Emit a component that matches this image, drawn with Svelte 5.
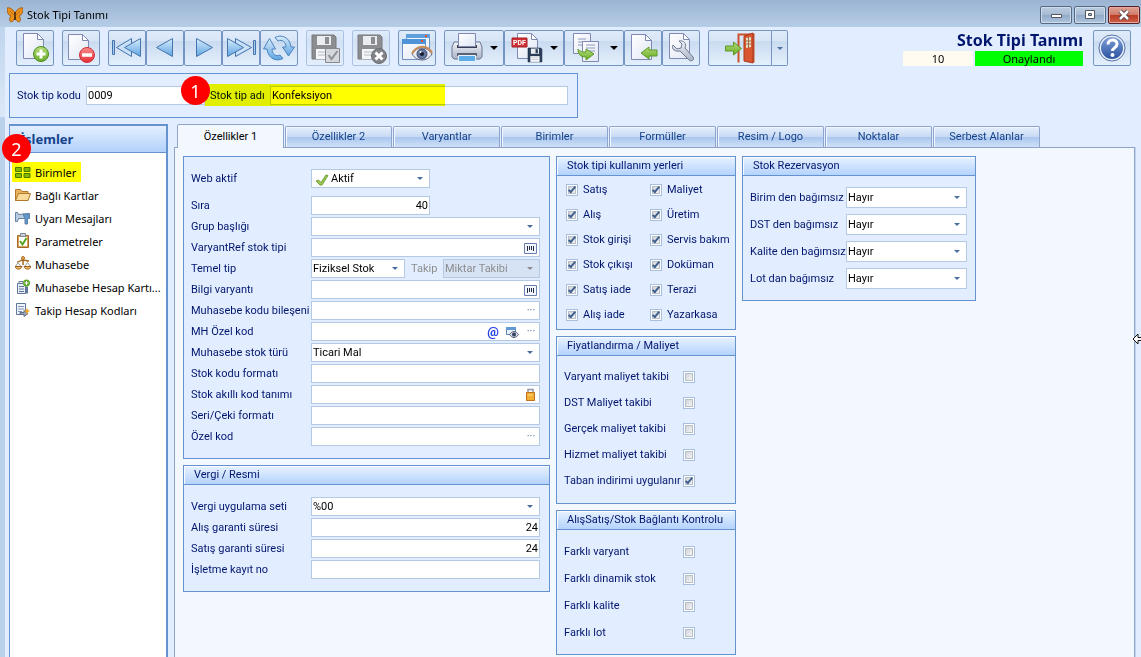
<script lang="ts">
  type Field = {
    id: string;
    label: string;
    kind: "text" | "select" | "pair";
    value?: string;
    align?: "right";
    tools?: string[];
  };

  const tabs = [
    "Özellikler 1",
    "Özellikler 2",
    "Varyantlar",
    "Birimler",
    "Formüller",
    "Resim / Logo",
    "Noktalar",
    "Serbest Alanlar",
  ];
  let activeTab = $state("Özellikler 1");

  const actions = [
    { icon: "grid", label: "Birimler", marked: true },
    { icon: "folder", label: "Bağlı Kartlar" },
    { icon: "horn", label: "Uyarı Mesajları" },
    { icon: "clipboard", label: "Parametreler" },
    { icon: "scales", label: "Muhasebe" },
    { icon: "ledger", label: "Muhasebe Hesap Kartı..." },
    { icon: "codes", label: "Takip Hesap Kodları" },
  ];

  const toolGroups = [
    [{ icon: "new", title: "Yeni" }],
    [{ icon: "remove", title: "Sil" }],
    [
      { icon: "first", title: "İlk" },
      { icon: "prev", title: "Önceki" },
      { icon: "next", title: "Sonraki" },
      { icon: "last", title: "Son" },
      { icon: "refresh", title: "Yenile" },
    ],
    [{ icon: "save", title: "Kaydet", disabled: true }],
    [{ icon: "cancel", title: "Vazgeç", disabled: true }],
    [{ icon: "preview", title: "Önizle" }],
    [
      { icon: "print", title: "Yazdır", menu: true },
      { icon: "pdf", title: "PDF", menu: true },
      { icon: "copy", title: "Kopyala", menu: true },
      { icon: "import", title: "Al" },
      { icon: "tools", title: "Araçlar" },
    ],
  ];

  const mainFields: Field[] = [
    { id: "sira", label: "Sıra", kind: "text", value: "40", align: "right" },
    { id: "grup", label: "Grup başlığı", kind: "select", value: "" },
    { id: "varyantref", label: "VaryantRef stok tipi", kind: "text", tools: ["barcode"] },
    { id: "temel", label: "Temel tip", kind: "pair", value: "Fiziksel Stok" },
    { id: "bilgi", label: "Bilgi varyantı", kind: "text", tools: ["barcode"] },
    { id: "mkb", label: "Muhasebe kodu bileşeni", kind: "text", tools: ["dots"] },
    { id: "mhozel", label: "MH Özel kod", kind: "text", tools: ["at", "view", "dots"] },
    { id: "mstur", label: "Muhasebe stok türü", kind: "select", value: "Ticari Mal" },
    { id: "skf", label: "Stok kodu formatı", kind: "text" },
    { id: "sak", label: "Stok akıllı kod tanımı", kind: "text", tools: ["lock"] },
    { id: "seri", label: "Seri/Çeki formatı", kind: "text" },
    { id: "ozel", label: "Özel kod", kind: "text", tools: ["dots"] },
  ];

  const taxFields: Field[] = [
    { id: "vergi", label: "Vergi uygulama seti", kind: "select", value: "%00" },
    { id: "alisg", label: "Alış garanti süresi", kind: "text", value: "24", align: "right" },
    { id: "satisg", label: "Satış garanti süresi", kind: "text", value: "24", align: "right" },
    { id: "kayit", label: "İşletme kayıt no", kind: "text" },
  ];

  const usages = [
    "Satış", "Maliyet",
    "Alış", "Üretim",
    "Stok girişi", "Servis bakım",
    "Stok çıkışı", "Doküman",
    "Satış iade", "Terazi",
    "Alış iade", "Yazarkasa",
  ];

  const pricing = [
    { label: "Varyant maliyet takibi", on: false },
    { label: "DST Maliyet takibi", on: false },
    { label: "Gerçek maliyet takibi", on: false },
    { label: "Hizmet maliyet takibi", on: false },
    { label: "Taban indirimi uygulanır", on: true },
  ];

  const linkChecks = [
    { label: "Farklı varyant", on: false },
    { label: "Farklı dinamik stok", on: false },
    { label: "Farklı kalite", on: false },
    { label: "Farklı lot", on: false },
  ];

  const reservations = [
    "Birim den bağımsız",
    "DST den bağımsız",
    "Kalite den bağımsız",
    "Lot dan bağımsız",
  ];
</script>

{#snippet page(x: number, y: number)}
  <g transform="translate({x} {y})">
    <path d="M.5.5h14l6 6v19h-20z" fill="url(#paper)" stroke="#8089b4" />
    <path d="M14.500.5v6h6z" fill="#fff" stroke="#8089b4" />
  </g>
{/snippet}

{#snippet floppy(x: number, y: number, s: number, body: string, edge: string)}
  <g transform="translate({x} {y}) scale({s})">
    <path d="M0 0h22l2 2v22H0z" fill={body} stroke={edge} />
    <path d="M5 1h14v9H5z" fill="#e9edf2" />
    <path d="M13 2h4v7h-4z" fill={body} />
    <path d="M4 14h16v10H4z" fill="#f4f6fa" />
    <path d="M6 17h12M6 20h12" stroke="#b4bac4" />
  </g>
{/snippet}

{#snippet toolIcon(name: string)}
  <svg class="tool-icon" viewBox="0 0 32 32" aria-hidden="true">
    {#if name === "new"}
      {@render page(4, 1)}
      <circle cx="22" cy="22" r="7.500" fill="url(#green)" stroke="#4b8a1c" />
      <path d="M22 17.500v9M17.500 22h9" stroke="#fff" stroke-width="3" />
    {:else if name === "remove"}
      {@render page(3, 2)}
      <circle cx="22" cy="23" r="7.500" fill="url(#red)" stroke="#d03038" />
      <path d="M17 23h10" stroke="#fff" stroke-width="3.500" />
    {:else if name === "first"}
      <path d="M1.500 8.500h2v14h-2z" fill="#a9cdf0" stroke="#4473ae" />
      <path d="M20.500 6.500v18L5.500 15.500z" fill="#c9e0f7" stroke="#4473ae" />
      <path d="M29.500 6.500v18L13.500 15.500z" fill="url(#blue)" stroke="#4473ae" />
    {:else if name === "prev"}
      <path d="M23.500 6.500v18L7.500 15.500z" fill="url(#blue)" stroke="#4473ae" />
    {:else if name === "next"}
      <path d="M9.500 6.500v18L25.500 15.500z" fill="url(#blue)" stroke="#4473ae" />
    {:else if name === "last"}
      <path d="M28.500 8.500h2v14h-2z" fill="#a9cdf0" stroke="#4473ae" />
      <path d="M10.500 6.500v18l16-9z" fill="#c9e0f7" stroke="#4473ae" />
      <path d="M2.500 6.500v18l16-9z" fill="url(#blue)" stroke="#4473ae" />
    {:else if name === "refresh"}
      <path d="M12 5.500C18 2 27 5 28 15h3.500l-6 9-6-9H23c0-5-4-8-8-6z" fill="url(#blue)" stroke="#4b83bf" />
      <path d="M20 26.500C14 30 5 27 4 17H.5l6-10.500 6 10.500H9c0 5 4 8 8 6z" fill="url(#blue)" stroke="#4b83bf" />
    {:else if name === "save"}
      {@render floppy(3, 3, 1, "#8b8d91", "#77797d")}
      <path d="M16.500 16.500h14v14h-14z" fill="#d4d7dc" stroke="#85888e" />
      <path d="m19.500 23 3 4 6-8" fill="none" stroke="#8d9095" stroke-width="2" />
    {:else if name === "cancel"}
      {@render floppy(3, 3, 1, "#8b8d91", "#77797d")}
      <circle cx="24" cy="24" r="7.500" fill="#808489" stroke="#6b6e73" />
      <path d="m20.500 20.500 7 7m0-7-7 7" stroke="#fff" stroke-width="3" />
    {:else if name === "preview"}
      <path d="M5.500 2.500h23v20h-23z" fill="#f0f6fd" stroke="#6d93c2" />
      <path d="M5 2h24v4H5z" fill="#5f9fdc" />
      <path d="M1.500 7.500h23v20h-23z" fill="url(#paper)" stroke="#6d93c2" />
      <path d="M1 7h24v5H1z" fill="#4f94d8" />
      <path d="M20 8h2v2h-2zM24 3h2v2h-2z" fill="#e8502d" />
      <path d="M11 22c5-8 15-8 20 0-5 8-15 8-20 0z" fill="#e9e9f2" stroke="#5f6686" />
      <path d="M11 21.500c5-9 16-9 20-.5" fill="none" stroke="#c88c58" stroke-width="2" />
      <circle cx="21" cy="22" r="5" fill="#65799f" stroke="#3f4e72" />
      <circle cx="21" cy="22" r="2" fill="#141c30" />
      <circle cx="19.500" cy="20" r="1" fill="#fff" />
    {:else if name === "print"}
      <path d="M3 10h26l2 5v10l-2 2H3l-2-2V15z" fill="url(#metal)" stroke="#6d7590" />
      <path d="M6 13h20v3H6z" fill="#3a3e4a" />
      <path d="M7.500 1.500h17v13h-17z" fill="url(#paper)" stroke="#8089b4" />
      <path d="M6 21h20v3H6z" fill="#5b6278" />
      <path d="M7.500 23.500h17v6h-17z" fill="#5dabe8" stroke="#e9f2fb" />
    {:else if name === "pdf"}
      {@render page(6, 1)}
      <path d="M1 6h15v9H1z" fill="#cf2f35" stroke="#a82026" />
      <text x="2" y="13" font-size="7" font-weight="bold" fill="#fff">PDF</text>
      {@render floppy(17, 16, 0.58, "#2c3d58", "#1d2b42")}
    {:else if name === "copy"}
      <path d="M2.500 1.500h17v20h-17z" fill="url(#paper)" stroke="#8089b4" />
      <path d="M7 7h8M7 10h8M7 13h4" stroke="#8d9abf" />
      <path d="M11.500 9.500h16v20h-16z" fill="url(#paper)" stroke="#8089b4" />
      <path d="M15 13h9M15 16h9M18 19h6" stroke="#8d9abf" />
      <path d="M7 17c2 3 5 3 8 3v-3l8 5-8 6v-3c-6 0-8-3-8-8z" fill="url(#green)" stroke="#5c9a28" />
    {:else if name === "import"}
      {@render page(4, 2)}
      <path d="M30 18h-8v-3l-8 6 8 6v-3h8z" fill="url(#green)" stroke="#5c9a28" />
    {:else if name === "tools"}
      {@render page(4, 1)}
      <path d="M8 13l4 4 4-1 1-4-3-3c5-1 8 3 6 7l8 9c2 3-2 5-4 3l-9-9c-5 1-9-2-7-6z" fill="url(#metal)" stroke="#6d7a94" />
    {:else if name === "exit"}
      <path d="M14.500 30.500v-28h15v28" fill="none" stroke="#c9522f" stroke-width="2" />
      <path d="M20 4l9-3v30l-9-2z" fill="#d85530" stroke="#a93a1d" />
      <path d="M22 6l5-1v10l-5 1z" fill="#e3dfc0" />
      <path d="M24.500 5v11M22 9h5M22 12h5" stroke="#a06a4a" />
      <path d="M1.500 14h8v-4l8 6.500-8 6.500v-4h-8z" fill="url(#green)" stroke="#5c9a28" />
    {:else if name === "help"}
      <circle cx="16" cy="16" r="13" fill="#eef3fb" stroke="#5270a8" />
      <circle cx="16" cy="16" r="11" fill="url(#help)" />
      <path d="M12 12.500c0-6 9-6 9-.5 0 4-4.500 3.500-4.500 7" fill="none" stroke="#fff" stroke-width="3" />
      <circle cx="16.500" cy="23" r="2" fill="#fff" />
    {/if}
  </svg>
{/snippet}

{#snippet smallIcon(name: string)}
  <svg class="small-icon" viewBox="0 0 16 16" aria-hidden="true">
    {#if name === "grid"}
      <path d="M.5 3.500h6v4h-6zM9 3.500h6v4H9zM.5 9.500h6v4h-6zM9 9.500h6v4H9z" fill="#86ba00" stroke="#4b7a00" />
    {:else if name === "folder"}
      <path d="M.5 13.500v-11h5l1.500 2h6v9z" fill="#e9b25c" stroke="#b07828" />
      <path d="m.5 13.500 3-7h12l-2.500 7z" fill="#fbdb9c" stroke="#b07828" />
    {:else if name === "horn"}
      <path d="M.5 2.500h2l1 2 11-1v5l-11 0-1 3h-2z" fill="#b9cde2" stroke="#66809f" />
      <path d="M8 4h6.500v4l-2 1v5h-2.500V9z" fill="#5f98cf" stroke="#5e7fa6" />
    {:else if name === "clipboard"}
      <path d="M2.500 2.500h11v12h-11z" fill="#d99f55" stroke="#a36b2a" />
      <path d="M4 4h8v9H4z" fill="#fff" />
      <path d="M5.500.5h5v3h-5z" fill="#c9d0da" stroke="#7c8797" />
      <path d="m5 8 2.500 3.500L11.500 5" fill="none" stroke="#59a51d" stroke-width="2" />
    {:else if name === "scales"}
      <path d="M8 1v8M2 6c3 0 3-2 6-2s3 1 6 1" fill="none" stroke="#a86a20" stroke-width="1.500" />
      <circle cx="8" cy="2" r="1.500" fill="#f0b458" stroke="#a86a20" />
      <path d="m.5 10.500 2.500-4 3 4zM9.500 10.500l3-4 3 4z" fill="#fff" stroke="#9a9a9a" />
      <path d="M0 10.500h7c-1 3.500-6 3.500-7 0zM9 10.500h7c-1 3.500-6 3.500-7 0z" fill="#f2b766" stroke="#9c5f1b" />
    {:else if name === "ledger"}
      <path d="M2.500 4.500h8v10h-8z" fill="#e7edf6" stroke="#62769a" />
      <path d="M4 2.500h4v2H4zM4 7.500h5M4 10h5M4 12.500h5" fill="none" stroke="#62769a" />
      <path d="M12 7.500v7" stroke="#62769a" stroke-width="2" />
      <circle cx="11.500" cy="4" r="3.500" fill="#62a92b" />
      <path d="M11.500 2v4m-2-2h4" stroke="#fff" />
    {:else if name === "codes"}
      <path d="M1.500 1.500h9v11h-9z" fill="#f1f5fb" stroke="#60779d" />
      <path d="M3 4.500h6M3 7h6M3 9.500h4" stroke="#7d90b3" />
      <path d="M5 10.500h4v-2l4 3-4 3v-2H5z" fill="#9aa7bd" stroke="#5b6b88" />
      <path d="m12 6 1 2 2 1-2 1-1 3-1-3-2-1 2-1z" fill="#f5a623" />
    {:else if name === "butterfly"}
      <path d="M8 6.500C7 3 3 0 0 1c0 4 1 7 4 8-2 2-2 5 0 6 2 0 4-3 4-5 0 2 2 5 4 5 2-1 2-4 0-6 3-1 4-4 4-8-3-1-7 2-8 5.500z" fill="#e8901a" stroke="#9a5210" stroke-width=".8" />
      <path d="M8 5v8" stroke="#3d2208" stroke-width="1.500" />
      <path d="m7 8-4-4M9 8l4-4" stroke="#b0600c" stroke-width=".7" />
    {:else if name === "check"}
      <path d="M2 10l2.500-1L7 11.500 12 4l2 .5L8 14H6z" fill="#9cc957" stroke="#6f9f35" />
    {:else if name === "barcode"}
      <path d="M2.500 3.500h12v10h-12z" fill="#f4f6fd" stroke="#6a7fae" />
      <path d="M5.500 6v5M7.500 6v4M9.500 6v4M11.500 6v5" stroke="#222c4a" />
    {:else if name === "view"}
      <path d="M2.500 3.500h9v7h-9z" fill="#eaf2fb" stroke="#5d83b3" />
      <path d="M2 3h10v3H2z" fill="#5f98d3" />
      <path d="M5.500 10.500c3-4 6-4 9 0-3 4-6 4-9 0z" fill="#d5dae6" stroke="#53617e" />
      <circle cx="10" cy="10.500" r="2" fill="#33405e" />
    {:else if name === "lock"}
      <path d="M6 7V2.500h5V7" fill="none" stroke="#9097a8" stroke-width="1.500" />
      <path d="M4.500 5.500h8v8h-8z" fill="#f4b034" stroke="#c0701a" />
      <path d="M6 8h5" stroke="#fbd784" />
    {/if}
  </svg>
{/snippet}

{#snippet dropdown(id: string, value: string, disabled = false)}
  <div class="box select" class:disabled>
    <select {id} {disabled}>
      <option>{value}</option>
    </select>
    <span class="caret"></span>
  </div>
{/snippet}

{#snippet row(f: Field)}
  <label for={f.id}>{f.label}</label>
  {#if f.kind === "select"}
    {@render dropdown(f.id, f.value ?? "")}
  {:else if f.kind === "pair"}
    <div class="pair">
      {@render dropdown(f.id, f.value ?? "")}
      <label class="dim" for="takip">Takip</label>
      {@render dropdown("takip", "Miktar Takibi", true)}
    </div>
  {:else}
    <div class="box" class:short={f.id === "sira"}>
      <input id={f.id} type="text" value={f.value ?? ""} class:right={f.align === "right"} />
      {#each f.tools ?? [] as tool}
        <button class="inner-btn" type="button" aria-label={tool}>
          {#if tool === "dots"}
            <span class="dots">···</span>
          {:else if tool === "at"}
            <span class="at">@</span>
          {:else}
            {@render smallIcon(tool)}
          {/if}
        </button>
      {/each}
    </div>
  {/if}
{/snippet}

<svg class="defs" width="0" height="0" aria-hidden="true">
  <defs>
    <linearGradient id="paper" x1="0" y1="0" x2="1" y2="1">
      <stop offset="0" stop-color="#fff" /><stop offset="1" stop-color="#dfe6f4" />
    </linearGradient>
    <linearGradient id="green" x1="0" y1="0" x2="0" y2="1">
      <stop offset="0" stop-color="#b5dc7a" /><stop offset="1" stop-color="#67ac25" />
    </linearGradient>
    <linearGradient id="red" x1="0" y1="0" x2="0" y2="1">
      <stop offset="0" stop-color="#fb8c8c" /><stop offset="1" stop-color="#e52d35" />
    </linearGradient>
    <linearGradient id="blue" x1="0" y1="0" x2="0" y2="1">
      <stop offset="0" stop-color="#d8ecfb" /><stop offset="1" stop-color="#5ea5e2" />
    </linearGradient>
    <linearGradient id="metal" x1="0" y1="0" x2="0" y2="1">
      <stop offset="0" stop-color="#f1f3f8" /><stop offset="1" stop-color="#a9b2c6" />
    </linearGradient>
    <linearGradient id="help" x1="0" y1="0" x2="0" y2="1">
      <stop offset="0" stop-color="#7ea0d8" /><stop offset="1" stop-color="#2a539f" />
    </linearGradient>
  </defs>
</svg>

<div class="window">
  <header class="titlebar">
    {@render smallIcon("butterfly")}
    <span class="caption">Stok Tipi Tanımı</span>
    <button class="win-btn" type="button" aria-label="Küçült">
      <svg viewBox="0 0 30 16"><path d="M10.500 7.500h10v3h-10z" fill="#fff" stroke="#53565e" /></svg>
    </button>
    <button class="win-btn" type="button" aria-label="Büyüt">
      <svg viewBox="0 0 30 16">
        <path d="M10.500 3.500h9v8h-9z" fill="#fff" stroke="#53565e" />
        <path d="M13.500 6.500h3v2h-3z" fill="#a9bfd9" stroke="#53565e" />
      </svg>
    </button>
    <button class="win-btn close" type="button" aria-label="Kapat">
      <svg viewBox="0 0 30 16">
        <path d="m11 4 8 8m0-8-8 8" stroke="#53404a" stroke-width="4.500" />
        <path d="m11 4 8 8m0-8-8 8" stroke="#fff" stroke-width="2.500" />
      </svg>
    </button>
  </header>

  <main class="client">
    <div class="toolbar">
      {#each toolGroups as group}
        <div class="tool-group">
          {#each group as tool}
            <button class="tool" class:menu={tool.menu} type="button" title={tool.title} disabled={tool.disabled}>
              {@render toolIcon(tool.icon)}
              {#if tool.menu}<span class="arrow"></span>{/if}
            </button>
          {/each}
        </div>
      {/each}
      <div class="tool-group">
        <button class="tool exit" type="button" title="Çıkış">{@render toolIcon("exit")}</button>
        <button class="tool exit-menu" type="button" aria-label="Çıkış seçenekleri"><span class="caret"></span></button>
      </div>
      <div class="record">
        <h1>Stok Tipi Tanımı</h1>
        <div class="record-state">
          <span class="record-no">10</span>
          <span class="approved">Onaylandı</span>
        </div>
      </div>
      <button class="tool" type="button" title="Yardım">{@render toolIcon("help")}</button>
    </div>

    <section class="identity">
      <label for="kod">Stok tip kodu</label>
      <div class="box code"><input id="kod" type="text" value="0009" /></div>
      <div class="named">
        <label for="ad">Stok tip adı</label>
        <div class="box"><input id="ad" type="text" value="Konfeksiyon" /></div>
        <span class="marker"></span>
        <span class="badge badge-name">1</span>
      </div>
    </section>

    <div class="content">
      <nav class="sidebar">
        <h2>İşlemler</h2>
        <span class="badge badge-side">2</span>
        <ul>
          {#each actions as action}
            <li>
              <a href="#{action.icon}" class:marked={action.marked}>
                {@render smallIcon(action.icon)}{action.label}
              </a>
            </li>
          {/each}
        </ul>
      </nav>

      <div class="tabbed">
        <div class="tabs" role="tablist">
          {#each tabs as tab}
            <button
              class="tab"
              class:active={tab === activeTab}
              role="tab"
              aria-selected={tab === activeTab}
              onclick={() => (activeTab = tab)}>{tab}</button
            >
          {/each}
        </div>

        <div class="sheet" role="tabpanel">
          <div class="col wide">
            <section class="group">
              <div class="form">
                <label for="web">Web aktif</label>
                <div class="box select with-icon">
                  {@render smallIcon("check")}
                  <select id="web"><option>Aktif</option></select>
                  <span class="caret"></span>
                </div>
              </div>
              <div class="form rest">
                {#each mainFields as f (f.id)}
                  {@render row(f)}
                {/each}
              </div>
            </section>
            <section class="group">
              <h3>Vergi / Resmi</h3>
              <div class="form tax">
                {#each taxFields as f (f.id)}
                  {@render row(f)}
                {/each}
              </div>
            </section>
          </div>

          <div class="col narrow">
            <section class="group">
              <h3>Stok tipi kullanım yerleri</h3>
              <div class="usages">
                {#each usages as usage}
                  <label><input type="checkbox" checked />{usage}</label>
                {/each}
              </div>
            </section>
            <section class="group">
              <h3>Fiyatlandırma / Maliyet</h3>
              <div class="checks">
                {#each pricing as item}
                  <label><span>{item.label}</span><input type="checkbox" checked={item.on} /></label>
                {/each}
              </div>
            </section>
            <section class="group">
              <h3>AlışSatış/Stok Bağlantı Kontrolu</h3>
              <div class="checks loose">
                {#each linkChecks as item}
                  <label><span>{item.label}</span><input type="checkbox" checked={item.on} /></label>
                {/each}
              </div>
            </section>
          </div>

          <div class="col">
            <section class="group">
              <h3>Stok Rezervasyon</h3>
              <div class="form reserve">
                {#each reservations as label, i}
                  <label for="rez{i}">{label}</label>
                  {@render dropdown(`rez${i}`, "Hayır")}
                {/each}
              </div>
            </section>
          </div>
        </div>
      </div>

      <svg class="resize-cursor" viewBox="0 0 14 12" aria-hidden="true">
        <path d="M1 6l5-5v3.500h8v3H6V11z" fill="#fff" stroke="#111" />
      </svg>
    </div>
  </main>
</div>

<style>
  :global(body) {
    margin: 0;
  }

  .window {
    --ui: Roboto, "Liberation Sans", sans-serif;
    --shell: "Noto Sans", "Open Sans", sans-serif;
    --line: #6593cf;
    --field-line: #b4c9e4;
    --ink: #00156e;
    display: flex;
    flex-direction: column;
    height: 100vh;
    overflow: hidden;
    box-sizing: border-box;
    background: linear-gradient(#9ab4d2, #bfd5ee 27px, #dce8f8 116px, #b9d1ea 118px);
    color: var(--ink);
    font: 11px/14px var(--ui);
  }

  .window *,
  .window *::before {
    box-sizing: border-box;
  }

  .defs {
    position: absolute;
  }

  svg {
    display: block;
    flex: none;
  }

  button,
  input,
  select {
    font: inherit;
    color: inherit;
    margin: 0;
    padding: 0;
  }

  h1,
  h2,
  h3,
  ul {
    margin: 0;
    padding: 0;
  }

  .titlebar {
    display: flex;
    align-items: center;
    gap: 2px;
    height: 27px;
    flex: none;
    padding: 3px 1px 0 7px;
    background: linear-gradient(#9ab4d2, #b6cde6);
    color: #000;
    font: 11px/16px var(--shell);
  }

  .small-icon {
    width: 16px;
    height: 16px;
  }

  .caption {
    flex: 1;
    padding-left: 2px;
  }

  .win-btn {
    width: 32px;
    height: 18px;
    border: 1px solid #566a85;
    border-radius: 2px;
    background: linear-gradient(#bccde0, #a5bad2 50%, #8fa9c8 50%, #b0c6de);
    box-shadow: inset 0 0 0 1px #cfdcea;
  }

  .win-btn.close {
    border-color: #56202a;
    background: linear-gradient(#e0a294, #cf7a68 50%, #b83a22 50%, #cf6048);
    box-shadow: inset 0 0 0 1px #e4a99f;
  }

  .client {
    flex: 1;
    min-height: 0;
    display: flex;
    flex-direction: column;
    margin-left: 5px;
    padding: 3px 0 0 4px;
    background: #e2eeff;
  }

  .toolbar {
    display: flex;
    align-items: flex-start;
    gap: 8px;
    padding: 0 10px 7px 7px;
  }

  .tool-group {
    display: flex;
  }

  .tool {
    display: flex;
    align-items: center;
    justify-content: center;
    width: 38px;
    height: 36px;
    border: 1px solid #7595c2;
    border-radius: 2px;
    background: linear-gradient(#dfebfa, #d8e5f6 30%, #c9dbf0 31%, #e4effc);
  }

  .tool:disabled {
    border-color: #a9c2e2;
    background: linear-gradient(#e0ecfb, #d3e2f5 31%, #e4effc);
  }

  .tool-icon {
    width: 32px;
    height: 32px;
    font-family: var(--ui);
  }

  .tool.menu {
    width: 60px;
    gap: 7px;
    justify-content: flex-start;
    padding-left: 6px;
  }

  .tool.exit {
    width: 64px;
    border-radius: 2px 0 0 2px;
  }

  .tool.exit-menu {
    width: 16px;
    border-left: 0;
    border-radius: 0 2px 2px 0;
  }

  .arrow {
    border: 4px solid transparent;
    border-top-color: #000;
    border-bottom: 0;
  }

  .caret {
    border: 3px solid transparent;
    border-top-color: #4a6f9f;
    border-bottom: 0;
  }

  .record {
    margin-left: auto;
    padding-right: 2px;
  }

  h1 {
    font: bold 16px/21px var(--shell);
    text-align: right;
  }

  .record-state {
    display: flex;
    gap: 2px;
    color: #000;
    text-align: center;
    font-family: var(--shell);
    line-height: 15px;
  }

  .record-no {
    width: 70px;
    background: #fffbf0;
  }

  .approved {
    width: 108px;
    background: #00ff00;
  }

  .identity {
    display: flex;
    align-items: center;
    width: 569px;
    height: 45px;
    flex: none;
    padding: 0 9px 0 7px;
    border: 1px solid var(--line);
  }

  .identity > label {
    width: 69px;
  }

  .code {
    width: 119px;
  }

  .named {
    position: relative;
    flex: 1;
    display: flex;
    align-items: center;
  }

  .named label {
    width: 65px;
    padding-left: 5px;
  }

  .named .box {
    flex: 1;
  }

  .marker {
    position: absolute;
    left: 0;
    top: -2px;
    width: 240px;
    height: 22px;
    background: #ffff00;
    mix-blend-mode: multiply;
    pointer-events: none;
  }

  .badge {
    position: absolute;
    display: flex;
    align-items: center;
    justify-content: center;
    width: 29px;
    height: 29px;
    border-radius: 50%;
    background: #ff0000;
    color: #fff;
    font: 18px/20px var(--shell);
  }

  .badge-name {
    left: -24px;
    top: -10px;
  }

  .badge-side {
    left: -8px;
    top: 8px;
  }

  .content {
    position: relative;
    flex: 1;
    min-height: 0;
    display: flex;
    align-items: stretch;
    gap: 6px;
    padding: 6px 6px 0 0;
  }

  .sidebar {
    position: relative;
    width: 159px;
    flex: none;
    border: 1px solid var(--line);
    border-width: 2px 2px 0 1px;
    background: #fff;
    color: #000;
    font: 11px/17px var(--shell);
  }

  h2 {
    height: 27px;
    padding-left: 10px;
    border-bottom: 1px solid var(--line);
    background: linear-gradient(#e4effe, #b2d1fb);
    color: #15428b;
    font: bold 13px/26px var(--shell);
  }

  .sidebar ul {
    list-style: none;
    padding: 9px 0 0 2px;
  }

  .sidebar li {
    height: 23px;
    display: flex;
  }

  .sidebar a {
    display: flex;
    align-items: center;
    gap: 4px;
    height: 20px;
    padding: 0 5px 0 3px;
    color: inherit;
    text-decoration: none;
    white-space: nowrap;
  }

  .sidebar a.marked {
    background: #ffff00;
  }

  .tabbed {
    flex: 1;
    min-width: 0;
    display: flex;
    flex-direction: column;
  }

  .tabs {
    display: flex;
    align-items: flex-end;
    gap: 1px;
    height: 23px;
    flex: none;
    padding-left: 3px;
  }

  .tab {
    width: 107px;
    height: 21px;
    border: 1px solid #8ea4cc;
    border-bottom: 0;
    border-radius: 2px 2px 0 0;
    background: linear-gradient(#e6effb, #c8dbf4 48%, #a9c6ee 50%, #cfe0f8);
    box-shadow: inset 1px 1px 0 #f4f8fe;
    color: #15428b;
  }

  .tab.active {
    z-index: 1;
    height: 24px;
    margin-bottom: -1px;
    background: #f3f8ff;
    color: #000;
  }

  .sheet {
    flex: 1;
    min-height: 0;
    display: flex;
    align-items: flex-start;
    gap: 6px;
    padding: 8px 8px 0;
    border: 1px solid #8ea4cc;
    border-bottom: 0;
    background: #f3f8ff;
    box-shadow: 1px 0 0 #c3d3ec;
  }

  .col {
    display: flex;
    flex-direction: column;
    gap: 6px;
    width: 234px;
  }

  .col.wide {
    width: 367px;
  }

  .col.narrow {
    width: 180px;
  }

  .group {
    border: 1px solid var(--line);
    background: #e2eeff;
  }

  h3 {
    height: 19px;
    padding-left: 10px;
    border-bottom: 1px solid var(--line);
    background: linear-gradient(#e8f2ff, #b4d3fd);
    box-shadow: inset 1px 1px 0 #f8fbff;
    font: 11px/18px var(--ui);
    white-space: nowrap;
  }

  .form {
    display: grid;
    grid-template-columns: 120px 1fr;
    align-items: center;
    row-gap: 2px;
    padding: 12px 9px 0 7px;
    white-space: nowrap;
  }

  .form.rest {
    padding-top: 8px;
    padding-bottom: 12px;
  }

  .form.tax {
    padding-bottom: 12px;
  }

  .form.reserve {
    grid-template-columns: 96px 1fr;
    row-gap: 6px;
    padding: 11px 8px 11px 7px;
  }

  .form.reserve .box {
    height: 21px;
  }

  .box {
    display: flex;
    align-items: center;
    gap: 4px;
    height: 19px;
    min-width: 0;
    padding-right: 1px;
    border: 1px solid var(--field-line);
    background: #fff;
    color: #000;
  }

  .box input,
  .box select {
    flex: 1;
    min-width: 0;
    width: 100%;
    height: 100%;
    padding-left: 1px;
    border: 0;
    outline: 0;
    background: none;
    appearance: none;
  }

  .box input.right {
    text-align: right;
  }

  .box.short,
  .box.with-icon {
    width: 119px;
  }

  .box.select {
    padding-right: 6px;
  }

  .box.with-icon {
    gap: 0;
    padding-left: 2px;
  }

  .box.disabled {
    background: #d6e3f5;
    color: #8d8d8d;
  }

  .box.disabled select {
    opacity: 1;
  }

  .disabled .caret {
    border-top-color: #8d8d8d;
  }

  .pair {
    display: grid;
    grid-template-columns: 94px 38px 1fr;
    align-items: center;
  }

  .dim {
    padding-left: 6px;
    color: #8d8d8d;
  }

  .inner-btn {
    display: flex;
    align-items: center;
    justify-content: center;
    min-width: 14px;
    height: 17px;
    border: 0;
    background: none;
  }

  .dots {
    color: #4a6f9f;
  }

  .at {
    color: #1f3fe0;
    font-size: 13px;
    font-weight: bold;
  }

  .usages {
    display: grid;
    grid-template-columns: 84px 1fr;
    grid-auto-rows: 25px;
    padding: 1px 0 2px 9px;
    white-space: nowrap;
  }

  .usages label {
    display: flex;
    align-items: center;
    gap: 5px;
  }

  .checks {
    display: grid;
    grid-auto-rows: 26px;
    padding: 8px 0 9px 7px;
  }

  .checks.loose {
    grid-auto-rows: 27px;
    padding-bottom: 8px;
  }

  .checks label {
    display: grid;
    grid-template-columns: 119px 12px;
    align-items: center;
    white-space: nowrap;
  }

  input[type="checkbox"] {
    display: block;
    flex: none;
    width: 12px;
    height: 12px;
    border: 1px solid #a9bfdf;
    background: linear-gradient(135deg, #c9cdd3, #fbfbfc);
    box-shadow: inset 0 0 0 1px #fff, inset 0 0 0 2px #b9bfc9;
    appearance: none;
  }

  input[type="checkbox"]:checked::before {
    content: "";
    display: block;
    width: 4px;
    height: 8px;
    margin: 0 0 0 3px;
    border: solid #40608e;
    border-width: 0 2px 2px 0;
    transform: rotate(40deg);
  }

  .resize-cursor {
    position: absolute;
    right: -5px;
    top: 215px;
    width: 14px;
    height: 12px;
  }
</style>
